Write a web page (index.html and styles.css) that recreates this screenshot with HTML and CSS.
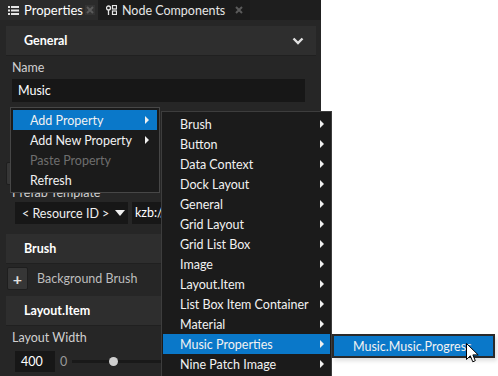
FILE: index.html
```html
<!DOCTYPE html>
<html lang="en">
<head>
    <meta charset="UTF-8">
    <title>Properties</title>
    <link rel="stylesheet" href="styles.css">
</head>
<body>
    <div class="screen">
        <div class="panel">
            <div class="tabs">
                <div class="tab active">
                    <svg class="tab-icon" width="11" height="9" viewBox="0 0 11 9">
                        <rect x="0" y="0" width="2" height="2" fill="#e6e6e6"/>
                        <rect x="3" y="0" width="8" height="2" fill="#e6e6e6"/>
                        <rect x="0" y="3.5" width="2" height="2" fill="#e6e6e6"/>
                        <rect x="3" y="3.5" width="8" height="2" fill="#e6e6e6"/>
                        <rect x="0" y="7" width="2" height="2" fill="#e6e6e6"/>
                        <rect x="3" y="7" width="8" height="2" fill="#e6e6e6"/>
                    </svg>
                    <span>Properties</span>
                    <span class="close boxed">
                        <svg width="8" height="8" viewBox="0 0 8 8"><path d="M1 1L7 7M7 1L1 7" stroke="#5a5a5a" stroke-width="2"/></svg>
                    </span>
                </div>
                <div class="tab">
                    <svg class="tab-icon" width="11" height="10" viewBox="0 0 11 10">
                        <circle cx="2.5" cy="3" r="2" fill="none" stroke="#e6e6e6" stroke-width="1.3"/>
                        <path d="M2.5 5V10" stroke="#e6e6e6" stroke-width="1.3"/>
                        <rect x="6.5" y="0.5" width="4" height="3.5" fill="none" stroke="#e6e6e6" stroke-width="1.2"/>
                        <rect x="6.5" y="6" width="4" height="3.5" fill="none" stroke="#e6e6e6" stroke-width="1.2"/>
                    </svg>
                    <span>Node Components</span>
                    <span class="close">
                        <svg width="8" height="8" viewBox="0 0 8 8"><path d="M1 1L7 7M7 1L1 7" stroke="#5a5a5a" stroke-width="2"/></svg>
                    </span>
                </div>
            </div>

            <div class="content">
                <div class="section-head">
                    <span>General</span>
                    <svg width="12" height="8" viewBox="0 0 12 8"><path d="M1.5 1.5L6 6L10.5 1.5" fill="none" stroke="#e0e0e0" stroke-width="2.4"/></svg>
                </div>

                <div class="label">Name</div>
                <div class="text-input">Music</div>

                <div class="hidden-row">
                    <span class="plus-btn">+</span>
                </div>

                <div class="label prefab">Prefab Template</div>
                <div class="resource-row">
                    <div class="dropdown">
                        <span>&lt; Resource ID &gt;</span>
                        <svg width="10" height="6" viewBox="0 0 10 6"><path d="M0 0H10L5 6Z" fill="#f0f0f0"/></svg>
                    </div>
                    <div class="text-input kzb">kzb://music/Prefabs/Music</div>
                </div>

                <div class="section-head">
                    <span>Brush</span>
                </div>
                <div class="prop-row">
                    <span class="plus-btn">+</span>
                    <span>Background Brush</span>
                </div>

                <div class="section-head">
                    <span>Layout.Item</span>
                </div>
                <div class="label">Layout Width</div>
                <div class="slider-row">
                    <div class="num-input">400</div>
                    <span class="min">0</span>
                    <div class="track"><div class="thumb"></div></div>
                </div>
            </div>
        </div>

        <!-- context menus -->
        <div class="menu menu-main">
            <div class="item selected">Add Property<span class="arrow"></span></div>
            <div class="item">Add New Property<span class="arrow"></span></div>
            <div class="item disabled">Paste Property</div>
            <div class="item">Refresh</div>
        </div>

        <div class="menu menu-sub">
            <div class="item">Brush<span class="arrow"></span></div>
            <div class="item">Button<span class="arrow"></span></div>
            <div class="item">Data Context<span class="arrow"></span></div>
            <div class="item">Dock Layout<span class="arrow"></span></div>
            <div class="item">General<span class="arrow"></span></div>
            <div class="item">Grid Layout<span class="arrow"></span></div>
            <div class="item">Grid List Box<span class="arrow"></span></div>
            <div class="item">Image<span class="arrow"></span></div>
            <div class="item">Layout.Item<span class="arrow"></span></div>
            <div class="item">List Box Item Container<span class="arrow"></span></div>
            <div class="item">Material<span class="arrow"></span></div>
            <div class="item selected">Music Properties<span class="arrow"></span></div>
            <div class="item">Nine Patch Image<span class="arrow"></span></div>
        </div>

        <div class="menu menu-leaf">
            <div class="item selected">Music.Music.Progress</div>
        </div>

        <svg class="cursor" width="13" height="20" viewBox="0 0 13 20">
            <path d="M0.5 0.5V16.5L4.3 12.8L6.8 18.8L9.3 17.7L6.9 11.9H12.2Z" fill="#ffffff" stroke="#000000" stroke-width="1" stroke-linejoin="round"/>
        </svg>
    </div>
</body>
</html>
```

FILE: styles.css
```css
body { margin: 0; background: #ffffff; font-family: "Lato", "Noto Sans", sans-serif; font-size: 12.5px; }
.screen { position: relative; width: 498px; height: 376px; overflow: hidden; }

.panel { width: 321px; height: 376px; background: #262626; color: #e8e8e8; display: flex; flex-direction: column; }

/* tab strip */
.tabs { display: flex; gap: 2px; height: 20px; background: #1e1e1e; }
.tab { display: flex; align-items: center; height: 20px; padding: 0 6px; background: #1b1b1b; color: #e6e6e6; font-size: 12.5px; }
.tab.active { background: #2b2b2b; color: #ffffff; width: 87px; padding: 0 3px 0 8px; font-size: 13px; }
.tab-icon { margin-right: 5px; }
.close { display: flex; align-items: center; justify-content: center; width: 10px; height: 10px; }
.tab .close { margin-left: 9px; }
.tab.active .close { margin-left: auto; }
.close.boxed { background: #343434; }

.content { display: flex; flex-direction: column; padding: 6px 5px 0 6px; }

.section-head {
    display: flex;
    align-items: center;
    justify-content: space-between;
    height: 30px;
    padding: 0 12px 0 18px;
    background: #2e2e2e;
    border-bottom: 1px solid #202020;
    box-sizing: border-box;
    color: #ffffff;
    font-weight: bold;
    font-size: 12.5px;
}

.label { color: #d0d0d0; margin: 4px 0 0 6px; line-height: 16px; }
.text-input { background: #171717; color: #ffffff; height: 23px; line-height: 23px; padding: 0 6px; margin: 3px 11px 0 6px; overflow: hidden; white-space: nowrap; }

.hidden-row { height: 22px; margin-top: 60px; display: flex; }
.plus-btn {
    display: flex; align-items: center; justify-content: center;
    width: 19px; height: 21px;
    background: #363636; border: 1px solid #1e1e1e; border-radius: 2px;
    color: #e0e0e0; font-size: 16px; font-weight: bold;
}

.label.prefab { margin-top: 1px; }
.resource-row { display: flex; margin: 1px 0 0 9px; height: 22px; }
.dropdown { display: flex; align-items: center; justify-content: space-between; width: 113px; padding: 0 3px 0 7px; box-sizing: border-box; background: #171717; color: #f0f0f0; }
.text-input.kzb { margin: 0 0 0 4px; height: 22px; line-height: 22px; padding: 0 3px; flex: 1; }

.resource-row + .section-head { margin-top: 10px; }
.prop-row { display: flex; align-items: center; gap: 9px; height: 23px; margin: 3px 0 6px 1px; color: #bdbdbd; }

.slider-row { display: flex; align-items: center; height: 21px; margin: 5px 0 0 9px; }
.num-input { width: 34px; height: 21px; line-height: 21px; padding-left: 6px; background: #171717; color: #ffffff; }
.min { color: #9a9a9a; margin-left: 5px; }
.track { position: relative; width: 240px; height: 3px; background: #191919; margin-left: 5px; }
.thumb { position: absolute; left: 37px; top: -3px; width: 9px; height: 9px; border-radius: 50%; background: #cfcfcf; }

/* menus */
.menu { position: absolute; background: #1b1b1b; border: 1px solid #474747; padding: 2px; color: #f2f2f2; }
.menu .item { position: relative; height: 20px; line-height: 21px; padding-left: 17px; white-space: nowrap; }
.menu .item.selected { background: #0a78c9; }
.menu .item.disabled { color: #6e6e6e; }
.arrow { position: absolute; right: 8px; top: 6px; width: 0; height: 0; border-top: 4px solid transparent; border-bottom: 4px solid transparent; border-left: 4px solid #f0f0f0; }

.menu-main { left: 10px; top: 107px; width: 144px; }
.menu-sub { left: 161px; top: 111px; width: 167px; padding: 2px 1px; border-color: #3d3d3d; }
.menu-sub .item { padding-left: 17px; }
.menu-sub .arrow { right: 6px; }
.menu-leaf { left: 332px; top: 334px; width: 159px; padding: 0; border: 2px solid #2a2a2a; box-shadow: 2px 3px 4px rgba(0,0,0,0.12); }
.menu-leaf .item { padding-left: 19px; }

.cursor { position: absolute; left: 466px; top: 343px; }
```
